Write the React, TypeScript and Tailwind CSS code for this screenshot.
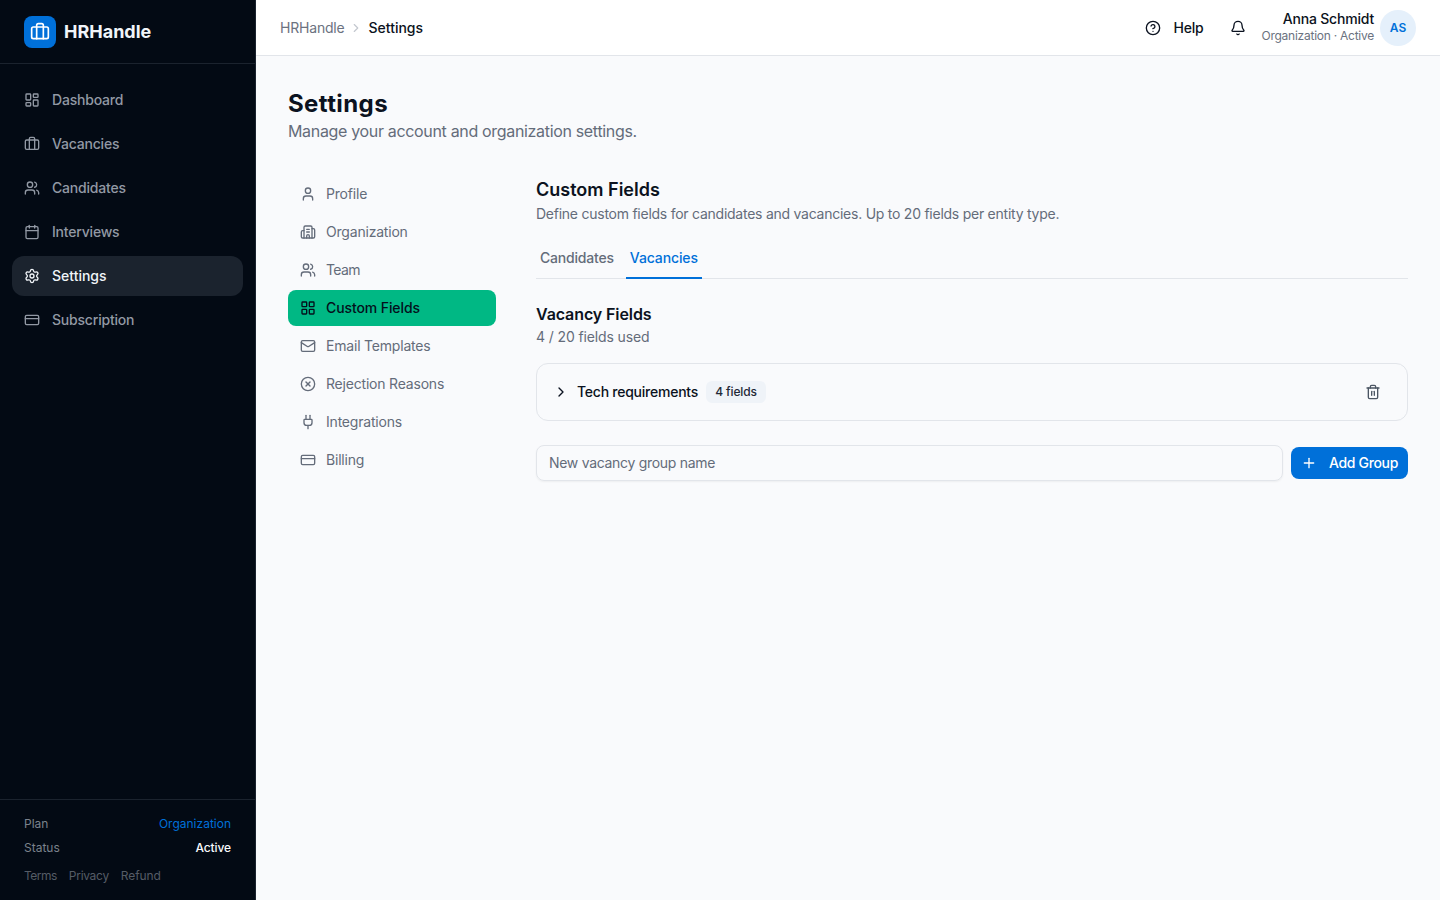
import {
  Bell,
  Briefcase,
  Building2,
  Calendar,
  ChevronRight,
  CircleHelp,
  CircleX,
  CreditCard,
  LayoutDashboard,
  LayoutGrid,
  Mail,
  Plug,
  Plus,
  Settings,
  Trash2,
  User,
  Users,
} from "lucide-react";

const mainNav = [
  { label: "Dashboard", icon: LayoutDashboard },
  { label: "Vacancies", icon: Briefcase },
  { label: "Candidates", icon: Users },
  { label: "Interviews", icon: Calendar },
  { label: "Settings", icon: Settings, active: true },
  { label: "Subscription", icon: CreditCard },
];

const settingsNav = [
  { label: "Profile", icon: User },
  { label: "Organization", icon: Building2 },
  { label: "Team", icon: Users, tight: true },
  { label: "Custom Fields", icon: LayoutGrid, active: true },
  { label: "Email Templates", icon: Mail },
  { label: "Rejection Reasons", icon: CircleX },
  { label: "Integrations", icon: Plug },
  { label: "Billing", icon: CreditCard },
];

const Sidebar = () => {
  return (
    <aside className="w-64 shrink-0 h-screen bg-[#030a14] border-r border-[#1b232e] flex flex-col">
      <div className="h-16 px-6 flex items-center gap-2 border-b border-[#1b232e]">
        <div className="w-8 h-8 rounded-lg bg-[#0070d9] flex items-center justify-center">
          <Briefcase size={20} color="#fff" strokeWidth={2} />
        </div>
        <span className="text-lg font-bold text-[#f1f5f9]">HRHandle</span>
      </div>
      <nav className="flex-1 px-3 py-4 flex flex-col gap-1">
        {mainNav.map((item) => (
          <div
            key={item.label}
            className={
              item.active
                ? "h-10 px-3 flex items-center gap-3 rounded-xl bg-[#1b232e] text-sm font-medium text-[#f1f5f9]"
                : "h-10 px-3 flex items-center gap-3 rounded-xl text-sm font-medium tracking-[-0.2px] text-[#9299a4]"
            }
          >
            <item.icon size={16} />
            {item.label}
          </div>
        ))}
      </nav>
      <div className="h-[101px] px-6 pt-4 border-t border-[#1b232e] text-xs">
        <div className="h-4 flex items-center justify-between">
          <span className="text-[#7b828c]">Plan</span>
          <span className="text-[#0070d9]">Organization</span>
        </div>
        <div className="h-4 mt-2 flex items-center justify-between">
          <span className="text-[#7b828c]">Status</span>
          <span className="tracking-[-0.1px] font-medium text-[#f8fafc]">
            Active
          </span>
        </div>
        <div className="h-4 mt-3 flex items-center gap-3 text-[#555c66]">
          <span className="tracking-[-0.5px]">Terms</span>
          <span className="tracking-[-0.3px]">Privacy</span>
          <span className="tracking-[-0.1px]">Refund</span>
        </div>
      </div>
    </aside>
  );
};

const Header = () => {
  return (
    <header className="h-14 shrink-0 bg-white border-b border-[#e2e5ea] pl-6 pr-6 flex items-center justify-between">
      <div className="flex items-center gap-[5px] text-sm">
        <span className="tracking-[-0.2px] text-[#6b7280]">HRHandle</span>
        <ChevronRight size={14} color="#c4c8cf" />
        <span className="font-medium text-[#0b1220]">Settings</span>
      </div>
      <div className="flex items-center">
        <div className="flex items-center gap-3 px-3 h-9 text-sm font-medium tracking-[-0.2px] text-[#0b1220]">
          <CircleHelp size={16} />
          Help
        </div>
        <div className="w-9 h-9 ml-1 flex items-center justify-center text-[#0b1220]">
          <Bell size={16} />
        </div>
        <div className="ml-1.5 flex items-center gap-1.5">
          <div className="flex flex-col items-end pb-1">
            <span className="text-sm leading-5 font-medium tracking-[-0.2px] text-[#0b1220]">
              Anna Schmidt
            </span>
            <span className="text-xs leading-[14px] tracking-[-0.25px] text-[#6b7280]">
              Organization · Active
            </span>
          </div>
          <div className="w-9 h-9 rounded-full bg-[#e5f0fb] flex items-center justify-center text-xs font-semibold text-[#0070d9]">
            AS
          </div>
        </div>
      </div>
    </header>
  );
};

const SettingsNav = () => {
  return (
    <nav className="w-52 shrink-0 flex flex-col gap-0.5">
      {settingsNav.map((item) => (
        <div
          key={item.label}
          className={
            item.active
              ? "h-9 px-3 flex items-center gap-2.5 rounded-lg bg-[#00b884] text-sm font-medium tracking-[-0.1px] text-[#04101c]"
              : item.tight
                ? "h-9 px-3 flex items-center gap-2.5 rounded-lg text-sm tracking-[-0.6px] text-[#646c7a]"
                : "h-9 px-3 flex items-center gap-2.5 rounded-lg text-sm tracking-[-0.2px] text-[#646c7a]"
          }
        >
          <item.icon size={16} />
          {item.label}
        </div>
      ))}
    </nav>
  );
};

const CustomFields = () => {
  return (
    <section className="flex-1 min-w-0">
      <h2 className="text-lg leading-7 font-semibold text-[#0b1220]">
        Custom Fields
      </h2>
      <p className="text-sm leading-5 tracking-[-0.25px] text-[#646c7a]">
        Define custom fields for candidates and vacancies. Up to 20 fields per
        entity type.
      </p>
      <div className="mt-4 h-[39px] flex gap-2 items-stretch border-b border-[#e2e5ea]">
        <div className="px-1 pb-0.5 flex items-center text-sm font-medium tracking-[-0.2px] text-[#646c7a]">
          Candidates
        </div>
        <div className="px-1 pb-px flex items-center text-sm font-medium tracking-[-0.12px] text-[#0070d9] border-b-2 border-[#0070d9] -mb-px">
          Vacancies
        </div>
      </div>
      <h3 className="mt-[23px] text-base leading-6 font-semibold tracking-[-0.1px] text-[#0b1220]">
        Vacancy Fields
      </h3>
      <p className="mt-px text-sm leading-5 tracking-[-0.12px] text-[#646c7a]">
        4 / 20 fields used
      </p>
      <div className="mt-4 h-[58px] pl-4 pr-[26px] flex items-center rounded-xl border border-[#e2e5ea]">
        <ChevronRight size={16} color="#0b1220" />
        <span className="ml-2 text-sm font-medium tracking-[-0.24px] text-[#0b1220]">
          Tech requirements
        </span>
        <span className="ml-2 h-[22px] w-[60px] flex items-center justify-center rounded-md bg-[#eff3f8] text-xs font-medium tracking-[-0.1px] text-[#1f2937]">
          4 fields
        </span>
        <Trash2 size={16} color="#4b5563" className="ml-auto" />
      </div>
      <div className="mt-6 flex items-center gap-2">
        <input
          placeholder="New vacancy group name"
          className="flex-1 h-9 px-3 pb-0.5 rounded-lg border border-[#e2e5ea] bg-transparent shadow-xs text-sm tracking-[-0.3px] outline-none placeholder:text-[#646c7a]"
        />
        <button className="h-8 w-[117px] pl-2.5 flex items-center gap-3 rounded-lg bg-[#0070d9] text-sm font-medium tracking-[-0.33px] text-white">
          <Plus size={16} />
          Add Group
        </button>
      </div>
    </section>
  );
};

export default function App() {
  return (
    <div className="flex h-screen overflow-hidden bg-[#f9fafc] font-['Inter',sans-serif]">
      <Sidebar />
      <div className="flex-1 min-w-0 flex flex-col">
        <Header />
        <main className="flex-1 p-8">
          <h1 className="text-2xl font-bold tracking-[0.4px] text-[#0b1220]">
            Settings
          </h1>
          <p className="-mt-px text-base tracking-[-0.33px] text-[#646c7a]">
            Manage your account and organization settings.
          </p>
          <div className="mt-[33px] flex gap-10">
            <SettingsNav />
            <CustomFields />
          </div>
        </main>
      </div>
    </div>
  );
}
